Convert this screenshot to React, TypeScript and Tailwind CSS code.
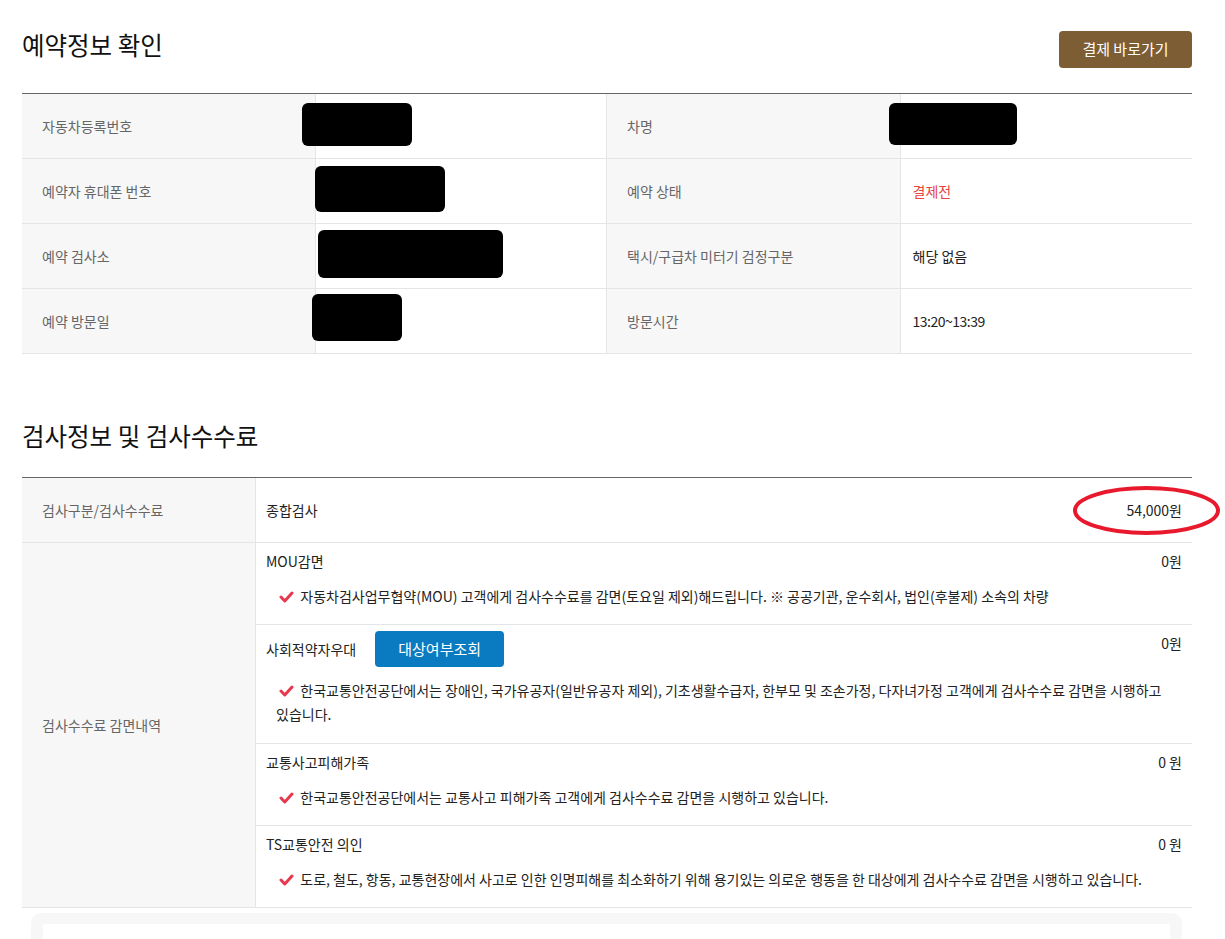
import { ReactNode } from "react";

const FONT = { fontFamily: '"Noto Sans CJK KR", "Noto Sans", sans-serif' };

type Blob = { left: number; top: number; w: number; h: number };

function Redact({ b }: { b: Blob }) {
  return (
    <div
      className="absolute bg-black rounded-[6px] blur-[0.6px]"
      style={{ left: b.left, top: b.top, width: b.w, height: b.h }}
    />
  );
}

function Check() {
  return (
    <svg width="15" height="12" viewBox="0 0 15 12" className="inline-block align-[-1px] mr-[3px]">
      <polyline
        points="2,6 5.8,10 13,2"
        fill="none"
        stroke="#e8384f"
        strokeWidth="3"
        strokeLinecap="round"
        strokeLinejoin="round"
      />
    </svg>
  );
}

function Label({ children }: { children: ReactNode }) {
  return (
    <div className="flex items-center bg-[#f7f7f7] pl-5 text-[14px] text-[#666] border-b border-[#e5e5e5]">
      {children}
    </div>
  );
}

function Value({ children, blob, last }: { children?: ReactNode; blob?: Blob; last?: boolean }) {
  return (
    <div
      className={
        "relative flex items-center pl-3 text-[14px] text-[#222] border-b border-l border-[#e5e5e5] " +
        (last ? "" : "border-r")
      }
    >
      {blob && <Redact b={blob} />}
      {children}
    </div>
  );
}

function Discount({
  title,
  amount,
  text,
  button,
}: {
  title: string;
  amount: string;
  text: string;
  button?: boolean;
}) {
  return (
    <div className="border-b border-[#e5e5e5] pl-[10px] pr-[10px]">
      {button ? (
        <div className="flex justify-between items-start pt-[6px]">
          <div className="flex items-center gap-[19px]">
            <span className="text-[14px] leading-5 text-[#222]">{title}</span>
            <button className="h-9 w-[129px] rounded-[4px] bg-[#0a7bc1] text-white text-[15px]">
              대상여부조회
            </button>
          </div>
          <span className="mt-[2px] text-[14px] leading-5 text-[#222]">{amount}</span>
        </div>
      ) : (
        <div className="flex justify-between items-center pt-2">
          <span className="text-[14px] leading-5 text-[#222]">{title}</span>
          <span className="text-[14px] leading-5 text-[#222]">{amount}</span>
        </div>
      )}
      <p
        className={
          "pl-[10px] break-keep text-[14px] text-[#222] " +
          (button ? "mt-[11px] leading-6 pb-[17px]" : "mt-[15px] leading-5 pb-[18px]")
        }
      >
        &nbsp;<Check /> {text}
      </p>
    </div>
  );
}

export default function App() {
  return (
    <div className="bg-white min-h-[939px]" style={FONT}>
      <div className="ml-[22px] w-[1170px]">
        <div className="flex justify-between items-start pt-[31px]">
          <h2 className="text-[24.5px] leading-7 text-[#111]">예약정보 확인</h2>
          <button className="h-[37px] w-[133px] rounded-[4px] bg-[#7d5d33] text-white text-[15px]">
            결제 바로가기
          </button>
        </div>

        <div className="mt-[25px] grid grid-cols-4 auto-rows-[65px] border-t border-[#666]">
          <Label>자동차등록번호</Label>
          <Value blob={{ left: -14, top: 9, w: 110, h: 43 }} />
          <Label>차명</Label>
          <Value last blob={{ left: -12, top: 9, w: 128, h: 42 }} />

          <Label>예약자 휴대폰 번호</Label>
          <Value blob={{ left: -1, top: 7, w: 130, h: 46 }} />
          <Label>예약 상태</Label>
          <Value last>
            <span className="text-[#e8413a]">결제전</span>
          </Value>

          <Label>예약 검사소</Label>
          <Value blob={{ left: 2, top: 6, w: 185, h: 48 }} />
          <Label>택시/구급차 미터기 검정구분</Label>
          <Value last>해당 없음</Value>

          <Label>예약 방문일</Label>
          <Value blob={{ left: -4, top: 5, w: 90, h: 47 }} />
          <Label>방문시간</Label>
          <Value last>
            <span className="tracking-[-0.5px]">13:20~13:39</span>
          </Value>
        </div>

        <h2 className="mt-[68px] text-[24.5px] leading-7 text-[#111]">검사정보 및 검사수수료</h2>

        <div className="mt-[27px] grid grid-cols-[234px_1fr] border-t border-[#666]">
          <div className="flex items-center h-[65px] bg-[#f7f7f7] pl-5 text-[14px] text-[#666] border-b border-r border-[#e5e5e5]">
            검사구분/검사수수료
          </div>
          <div className="relative flex items-center justify-between h-[65px] px-[10px] text-[14px] text-[#222] border-b border-[#e5e5e5]">
            <span>종합검사</span>
            <span>54,000원</span>
            <svg
              className="absolute left-[817px] top-[8px] overflow-visible"
              width="147"
              height="49"
              viewBox="0 0 147 49"
            >
              <ellipse cx="73.5" cy="24.5" rx="71.5" ry="22.5" fill="none" stroke="#e8192c" strokeWidth="4" />
            </svg>
          </div>

          <div className="flex items-center bg-[#f7f7f7] pl-5 text-[14px] text-[#666] border-b border-r border-[#e5e5e5]">
            검사수수료 감면내역
          </div>
          <div>
            <Discount
              title="MOU감면"
              amount="0원"
              text="자동차검사업무협약(MOU) 고객에게 검사수수료를 감면(토요일 제외)해드립니다. ※ 공공기관, 운수회사, 법인(후불제) 소속의 차량"
            />
            <Discount
              button
              title="사회적약자우대"
              amount="0원"
              text="한국교통안전공단에서는 장애인, 국가유공자(일반유공자 제외), 기초생활수급자, 한부모 및 조손가정, 다자녀가정 고객에게 검사수수료 감면을 시행하고 있습니다."
            />
            <Discount
              title="교통사고피해가족"
              amount="0 원"
              text="한국교통안전공단에서는 교통사고 피해가족 고객에게 검사수수료 감면을 시행하고 있습니다."
            />
            <Discount
              title="TS교통안전 의인"
              amount="0 원"
              text="도로, 철도, 항동, 교통현장에서 사고로 인한 인명피해를 최소화하기 위해 용기있는 의로운 행동을 한 대상에게 검사수수료 감면을 시행하고 있습니다."
            />
          </div>
        </div>

        <div className="mt-[5px] ml-[9px] mr-[10px] rounded-t-[10px] bg-[#f7f7f7] px-3 pt-[11px] h-[40px]">
          <div className="h-full bg-white" />
        </div>
      </div>
    </div>
  );
}
